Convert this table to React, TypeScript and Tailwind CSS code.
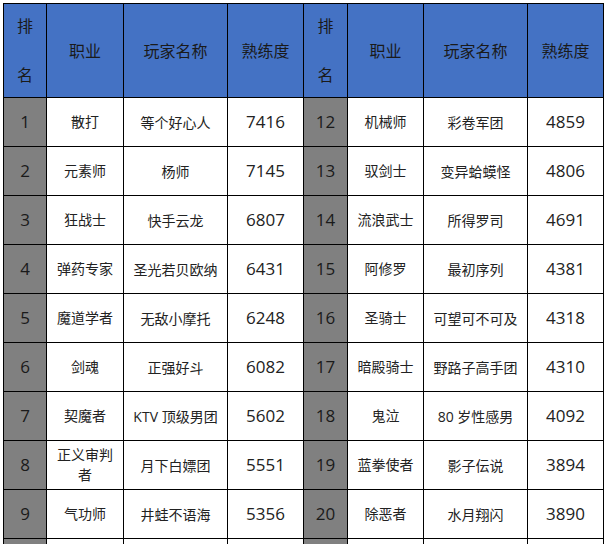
import React from "react";

type Row = [string, string, string, string];

const left: Row[] = [
  ["1", "散打", "等个好心人", "7416"],
  ["2", "元素师", "杨师", "7145"],
  ["3", "狂战士", "快手云龙", "6807"],
  ["4", "弹药专家", "圣光若贝欧纳", "6431"],
  ["5", "魔道学者", "无敌小摩托", "6248"],
  ["6", "剑魂", "正强好斗", "6082"],
  ["7", "契魔者", "KTV 顶级男团", "5602"],
  ["8", "正义审判者", "月下白嫖团", "5551"],
  ["9", "气功师", "井蛙不语海", "5356"],
  ["", "", "", ""],
];

const right: Row[] = [
  ["12", "机械师", "彩卷军团", "4859"],
  ["13", "驭剑士", "变异蛤蟆怪", "4806"],
  ["14", "流浪武士", "所得罗司", "4691"],
  ["15", "阿修罗", "最初序列", "4381"],
  ["16", "圣骑士", "可望可不可及", "4318"],
  ["17", "暗殿骑士", "野路子高手团", "4310"],
  ["18", "鬼泣", "80 岁性感男", "4092"],
  ["19", "蓝拳使者", "影子伝说", "3894"],
  ["20", "除恶者", "水月翔闪", "3890"],
  ["", "", "", ""],
];

const font = { fontFamily: "'Open Sans', 'Noto Sans CJK SC', sans-serif" };

function HeaderCells() {
  return (
    <>
      <div className="bg-[#4472c4] flex flex-col items-center justify-between py-[10px] text-[16px] leading-[24px] text-[#1a1a1a]">
        <span>排</span>
        <span>名</span>
      </div>
      <div className="bg-[#4472c4] flex items-center justify-center text-[16px] text-[#1a1a1a]">职业</div>
      <div className="bg-[#4472c4] flex items-center justify-center text-[16px] text-[#1a1a1a]">玩家名称</div>
      <div className="bg-[#4472c4] flex items-center justify-center text-[16px] text-[#1a1a1a]">熟练度</div>
    </>
  );
}

function BodyCells({ r }: { r: Row }) {
  return (
    <>
      <div className="bg-[#808080] flex items-center justify-center text-[17px] text-[#1a1a1a]">{r[0]}</div>
      <div className="bg-white flex items-center justify-center text-center px-[6px] text-[14px] leading-[20px] text-[#222]">{r[1]}</div>
      <div className="bg-white flex items-center justify-center text-center px-[4px] text-[14px] text-[#222]">{r[2]}</div>
      <div className="bg-white flex items-center justify-center text-[17px] text-[#222]">{r[3]}</div>
    </>
  );
}

export default function App() {
  return (
    <div className="w-[607px] h-[544px] overflow-hidden bg-white pt-[3px] pl-[3px]" style={font}>
      <div className="grid w-fit bg-black gap-px p-px grid-cols-[42px_76px_103px_75px_43px_75px_103px_75px] grid-rows-[93px_repeat(10,48px)]">
        <HeaderCells />
        <HeaderCells />
        {left.map((r, i) => (
          <React.Fragment key={i}>
            <BodyCells r={r} />
            <BodyCells r={right[i]} />
          </React.Fragment>
        ))}
      </div>
    </div>
  );
}
